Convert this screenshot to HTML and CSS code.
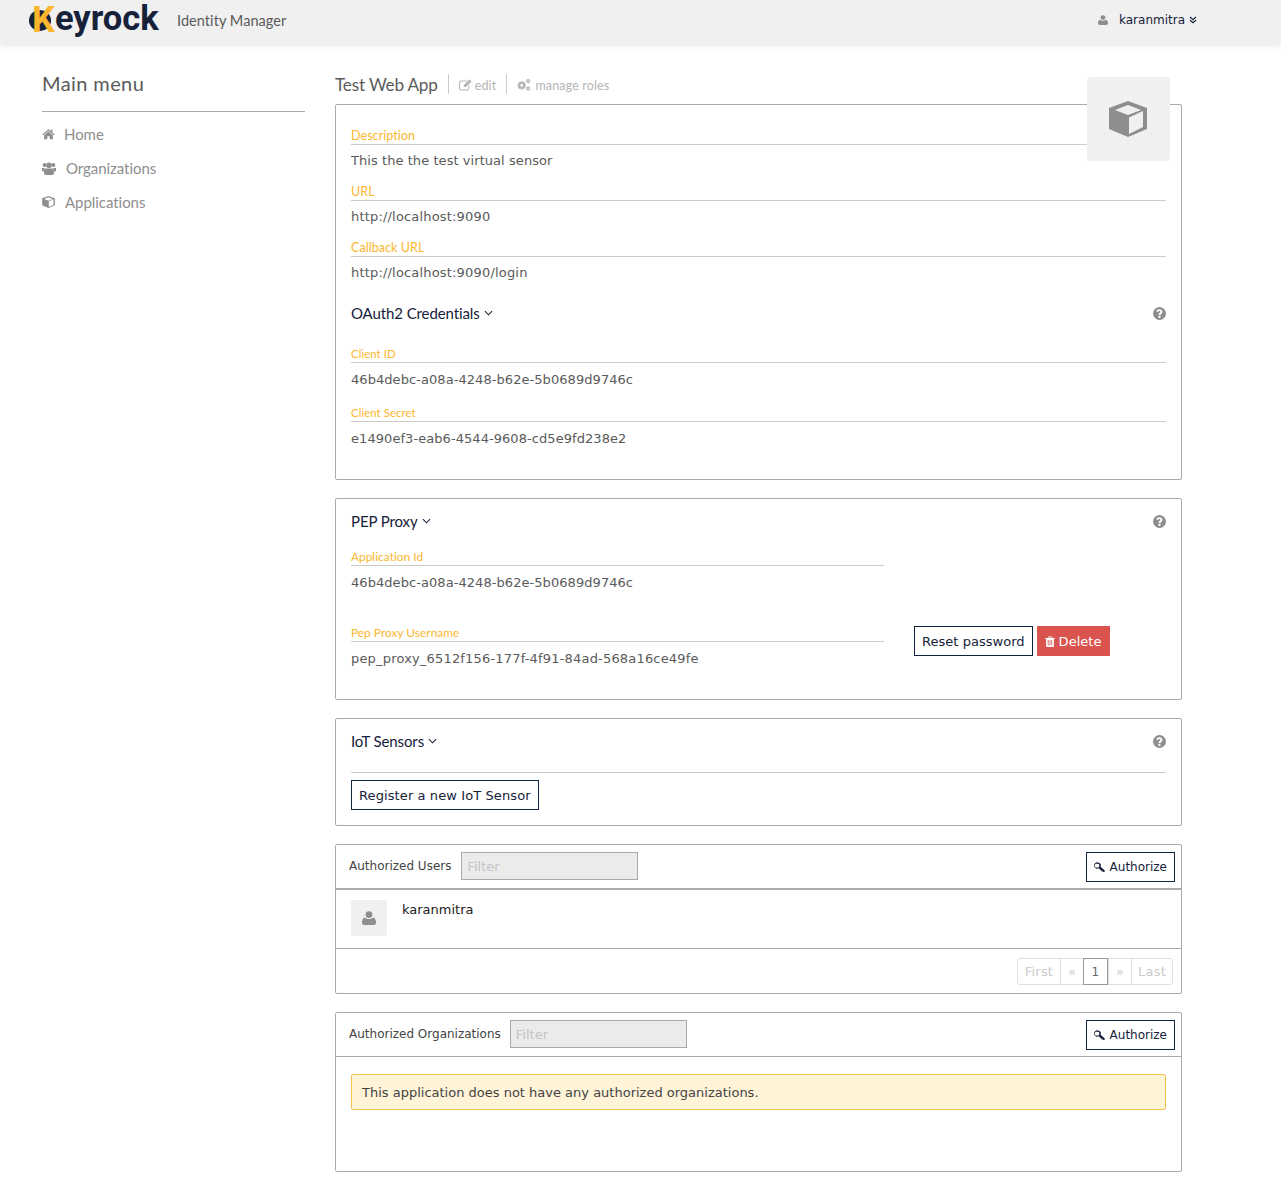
FILE: index.html
```html
<!DOCTYPE html>
<html>
<head>
  <meta charset="utf-8">
  <title>Keyrock Identity Manager</title>
  <link rel="stylesheet" href="styles.css">
</head>
<body>
  <svg class="defs" width="0" height="0">
    <symbol id="i-home" viewBox="0 0 16 14"><path d="M8 1 L0.5 7.4 L1.4 8.4 L8 2.9 L14.6 8.4 L15.5 7.4 L12.8 5.1 V1.6 H10.8 V3.4 Z M8 4 L2.6 8.5 V13.5 H6.5 V9.8 H9.5 V13.5 H13.4 V8.5 Z"/></symbol>
    <symbol id="i-users" viewBox="0 0 14 13"><circle cx="2.6" cy="3" r="2"/><circle cx="11.4" cy="3" r="2"/><circle cx="7" cy="3.2" r="2.8"/><path d="M0 6 H3 Q2.2 7 1.8 9.5 H0.8 Q0 9.5 0 8.5 Z M14 6 H11 Q11.8 7 12.2 9.5 H13.2 Q14 9.5 14 8.5 Z M3.5 6.5 H10.5 Q12 7 12 10 V11 Q12 13 10 13 H4 Q2 13 2 11 V10 Q2 7 3.5 6.5 Z"/></symbol>
    <symbol id="i-cube" viewBox="0 0 38 36"><path fill-rule="evenodd" d="M19 0 L38 7 V28 L19 36 L0 28 V7 Z M19 4 L6 9 L19 14 L32 9 Z M20 16.5 V33 L34 26 V10 Z"/></symbol>
    <symbol id="i-user" viewBox="0 0 14 14"><circle cx="7" cy="3.6" r="3.4"/><path d="M3 6.6 C5 8.6 9 8.6 11 6.6 C13 7 14 9 14 11.5 Q14 14 11.5 14 H2.5 Q0 14 0 11.5 C0 9 1 7 3 6.6 Z"/></symbol>
    <symbol id="i-help" viewBox="0 0 14 14"><path fill-rule="evenodd" d="M7 0 A7 7 0 1 1 7 14 A7 7 0 1 1 7 0 Z M6 9.8 V11.8 H8 V9.8 Z M7 2.4 C5.2 2.4 4.1 3.3 3.6 4.6 L5 5.6 C5.4 4.8 5.9 4.3 6.8 4.3 C7.6 4.3 8.1 4.7 8.1 5.2 C8.1 6.2 6 6.5 6 8.2 V9 H8 C8 7.7 10.2 7.4 10.2 5.1 C10.2 3.4 8.6 2.4 7 2.4 Z"/></symbol>
    <symbol id="i-trash" viewBox="0 0 12 14"><path fill-rule="evenodd" d="M4 0.5 H8 L9 2.5 H12 V3.7 H11 V12.5 Q11 14 9.5 14 H2.5 Q1 14 1 12.5 V3.7 H0 V2.5 H3 Z M4.6 1.6 L4.2 2.5 H7.8 L7.4 1.6 Z M3.2 5 V12 H4.2 V5 Z M5.5 5 V12 H6.5 V5 Z M7.8 5 V12 H8.8 V5 Z"/></symbol>
    <symbol id="i-key" viewBox="0 0 14 14"><path fill-rule="evenodd" d="M4.6 0.5 A4.1 4.1 0 0 1 8.4 6.2 L13.5 10.4 V12.6 H11.6 L10.6 11.5 L9.6 12 L9.2 10.6 L8 10.2 L6.3 8.1 A4.1 4.1 0 1 1 4.6 0.5 Z M3.9 2.3 A2.4 2.4 0 1 0 3.9 7 A2.4 2.4 0 1 0 3.9 2.3 Z"/></symbol>
    <symbol id="i-edit" viewBox="0 0 14 13"><path d="M2.2 1.5 H9 L7.9 2.6 H2.2 Q1.1 2.6 1.1 3.7 V10.3 Q1.1 11.4 2.2 11.4 H8.8 Q9.9 11.4 9.9 10.3 V7.6 L11 6.5 V10.3 Q11 12.5 8.8 12.5 H2.2 Q0 12.5 0 10.3 V3.7 Q0 1.5 2.2 1.5 Z M11.4 0.4 L13.6 2.6 L7.4 8.8 H5.2 V6.6 Z"/></symbol>
    <symbol id="i-cogs" viewBox="0 0 15 13"><path fill-rule="evenodd" d="M4 2.5 H6 L6.4 3.6 L7.6 3.1 L9 4.5 L8.4 5.6 L9.5 6 V8 L8.4 8.4 L9 9.5 L7.6 10.9 L6.4 10.4 L6 11.5 H4 L3.6 10.4 L2.4 10.9 L1 9.5 L1.6 8.4 L0.5 8 V6 L1.6 5.6 L1 4.5 L2.4 3.1 L3.6 3.6 Z M5 5.5 A1.5 1.5 0 1 0 5 8.5 A1.5 1.5 0 1 0 5 5.5 Z"/><path fill-rule="evenodd" d="M12 0 A2.3 2.3 0 1 1 12 4.6 A2.3 2.3 0 1 1 12 0 Z M12 1.5 A0.8 0.8 0 1 0 12 3.1 A0.8 0.8 0 1 0 12 1.5 Z M12 8 A2.3 2.3 0 1 1 12 12.6 A2.3 2.3 0 1 1 12 8 Z M12 9.5 A0.8 0.8 0 1 0 12 11.1 A0.8 0.8 0 1 0 12 9.5 Z"/></symbol>
    <symbol id="i-down" viewBox="0 0 10 6"><path d="M1 1 L5 5 L9 1" fill="none" stroke="currentColor" stroke-width="1.2"/></symbol>
    <symbol id="i-ddown" viewBox="0 0 8 8"><path d="M1 1 L4 3.6 L7 1 M1 4.2 L4 6.8 L7 4.2" fill="none" stroke="currentColor" stroke-width="1.2"/></symbol>
  </svg>

  <header class="topbar">
    <div class="logo"><span class="logo-k">K</span>eyrock</div>
    <div class="logo-sub">Identity Manager</div>
    <div class="user-menu">
      <svg class="ico ico-user"><use href="#i-user"/></svg>
      <span class="user-name">karanmitra</span>
      <svg class="ico ico-ddown"><use href="#i-ddown"/></svg>
    </div>
  </header>

  <div class="page">
    <nav class="sidebar">
      <h2 class="menu-title">Main menu</h2>
      <ul class="menu">
        <li><svg class="ico ico-menu"><use href="#i-home"/></svg><span class="m-home">Home</span></li>
        <li><svg class="ico ico-menu ico-users"><use href="#i-users"/></svg><span class="m-orgs">Organizations</span></li>
        <li><svg class="ico ico-menu"><use href="#i-cube"/></svg><span class="m-apps">Applications</span></li>
      </ul>
    </nav>

    <main class="content">
      <div class="title-row">
        <h1 class="app-title">Test Web App</h1>
        <a class="title-link"><svg class="ico ico-edit"><use href="#i-edit"/></svg>edit</a>
        <a class="title-link"><svg class="ico ico-cogs"><use href="#i-cogs"/></svg>manage roles</a>
      </div>

      <div class="app-avatar"><svg class="ico ico-cube-big"><use href="#i-cube"/></svg></div>

      <section class="panel panel-info">
        <div class="field"><div class="label">Description</div><div class="value">This the the test virtual sensor</div></div>
        <div class="field"><div class="label">URL</div><div class="value value-url">http://localhost:9090</div></div>
        <div class="field"><div class="label">Callback URL</div><div class="value value-url">http://localhost:9090/login</div></div>
        <div class="sub-head oauth-head">
          <h3>OAuth2 Credentials<svg class="ico ico-down"><use href="#i-down"/></svg></h3>
          <svg class="ico ico-help"><use href="#i-help"/></svg>
        </div>
        <div class="field field-cred"><div class="label label-cred">Client ID</div><div class="value">46b4debc-a08a-4248-b62e-5b0689d9746c</div></div>
        <div class="field field-cred"><div class="label label-cred">Client Secret</div><div class="value">e1490ef3-eab6-4544-9608-cd5e9fd238e2</div></div>
      </section>

      <section class="panel panel-pep">
        <div class="sub-head pep-head">
          <h3>PEP Proxy<svg class="ico ico-down"><use href="#i-down"/></svg></h3>
          <svg class="ico ico-help"><use href="#i-help"/></svg>
        </div>
        <div class="pep-row pep-first">
          <div class="field field-pep"><div class="label label-sm">Application Id</div><div class="value">46b4debc-a08a-4248-b62e-5b0689d9746c</div></div>
        </div>
        <div class="pep-row">
          <div class="field field-pep"><div class="label label-sm">Pep Proxy Username</div><div class="value value-url">pep_proxy_6512f156-177f-4f91-84ad-568a16ce49fe</div></div>
          <div class="pep-actions">
            <button class="btn">Reset password</button>
            <button class="btn btn-danger"><svg class="ico ico-trash"><use href="#i-trash"/></svg>Delete</button>
          </div>
        </div>
      </section>

      <section class="panel panel-iot">
        <div class="sub-head iot-head">
          <h3>IoT Sensors<svg class="ico ico-down"><use href="#i-down"/></svg></h3>
          <svg class="ico ico-help"><use href="#i-help"/></svg>
        </div>
        <button class="btn">Register a new IoT Sensor</button>
      </section>

      <section class="panel panel-list">
        <div class="list-head list-head-users">
          <span class="list-title">Authorized Users</span>
          <input class="filter" type="text" placeholder="Filter">
          <button class="btn btn-auth"><svg class="ico ico-key"><use href="#i-key"/></svg>Authorize</button>
        </div>
        <div class="list-row">
          <div class="row-avatar"><svg class="ico ico-avatar"><use href="#i-user"/></svg></div>
          <span class="row-name">karanmitra</span>
        </div>
        <div class="list-foot">
          <ul class="pager">
            <li class="pager-first">First</li><li class="pager-sm">«</li><li class="pager-on">1</li><li class="pager-sm">»</li><li class="pager-last">Last</li>
          </ul>
        </div>
      </section>

      <section class="panel panel-list">
        <div class="list-head">
          <span class="list-title">Authorized Organizations</span>
          <input class="filter" type="text" placeholder="Filter">
          <button class="btn btn-auth"><svg class="ico ico-key"><use href="#i-key"/></svg>Authorize</button>
        </div>
        <div class="list-body">
          <div class="alert">This application does not have any authorized organizations.</div>
        </div>
      </section>
    </main>
  </div>
</body>
</html>
```

FILE: styles.css
```css
*{
  box-sizing: border-box;
}
body{
  margin: 0;
  background-color: #fff;
  color: #5a5a5a;
  font-family: "DejaVu Sans", sans-serif;
  font-size: 13px;
  letter-spacing: .06px;
}
.defs{
  display: none;
}
.ico{
  fill: currentColor;
  flex: none;
}

/* top bar */
.topbar{
  display: flex;
  align-items: center;
  height: 44px;
  padding-left: 32px;
  padding-bottom: 4px;
  background-color: #f0f0f0;
  box-shadow: 0 1px 6px rgba(0,0,0,.12);
}
.logo{
  width: 128px;
  margin-bottom: 2px;
  color: #16213a;
  font-family: Roboto, sans-serif;
  font-size: 34.5px;
  font-weight: 700;
  line-height: 36px;
  letter-spacing: 0;
}
.logo-k{
  position: relative;
  z-index: 0;
  color: #fbb62d;
  font-size: 36px;
  vertical-align: -2px;
}
.logo-k::before{
  content: "";
  position: absolute;
  top: 11px;
  left: -3px;
  z-index: -1;
  width: 22px;
  height: 21px;
  border-radius: 50%;
  background-color: #16213a;
}
.logo-sub{
  margin-left: 17px;
  color: #5a5a5a;
  font-family: Lato, sans-serif;
  font-size: 14.5px;
}
.user-menu{
  display: flex;
  align-items: center;
  margin-left: auto;
  margin-right: 84px;
  color: #16213a;
  font-size: 12px;
  letter-spacing: 0;
}
.ico-user{
  width: 10px;
  height: 10px;
  margin-right: 11px;
  color: #8e8e8e;
}
.ico-ddown{
  width: 8px;
  height: 8px;
  margin-left: 4px;
}

/* page */
.page{
  display: flex;
  gap: 30px;
  padding-left: 42px;
}
.sidebar{
  width: 263px;
}
.menu-title{
  margin: 26px 0 0;
  padding-bottom: 14px;
  border-bottom: 1px solid #aaa;
  color: #5a5a5a;
  font-family: Lato, sans-serif;
  font-size: 20px;
  font-weight: 400;
  line-height: 27px;
  letter-spacing: .4px;
}
.menu{
  margin: 5px 0 0;
  padding: 0;
  list-style: none;
}
.menu li{
  display: flex;
  align-items: center;
  height: 34px;
  color: #8e8e8e;
  font-family: Lato, sans-serif;
  font-size: 15px;
  letter-spacing: -.05px;
}
.ico-menu{
  width: 13px;
  height: 12px;
}
.ico-users{
  width: 14px;
  height: 13px;
}
.m-home{
  margin-left: 9px;
}
.m-orgs{
  margin-left: 10px;
}
.m-apps{
  margin-left: 10px;
}

/* content */
.content{
  position: relative;
  width: 847px;
}
.title-row{
  display: flex;
  align-items: center;
  height: 60px;
  padding-top: 20px;
}
.app-title{
  margin: 0;
  padding-right: 10px;
  color: #5a5a5a;
  font-family: Lato, sans-serif;
  font-size: 17.2px;
  font-weight: 400;
  letter-spacing: -.2px;
}
.title-link{
  display: flex;
  align-items: center;
  height: 20px;
  padding: 2px 10px 0;
  border-left: 1px solid #ccc;
  color: #b5b5b5;
  font-family: Lato, sans-serif;
  font-size: 12.5px;
  letter-spacing: .15px;
}
.ico-edit{
  width: 13px;
  height: 12px;
  margin-right: 3px;
}
.ico-cogs{
  width: 14px;
  height: 12px;
  margin-right: 4px;
}
.app-avatar{
  position: absolute;
  top: 33px;
  left: 752px;
  display: flex;
  align-items: center;
  justify-content: center;
  width: 83px;
  height: 84px;
  border-radius: 3px;
  background-color: #f0f0f0;
  color: #8e8e8e;
}
.ico-cube-big{
  width: 38px;
  height: 36px;
  margin-right: 2px;
}

/* panels */
.panel{
  margin-bottom: 18px;
  border: 1px solid #aaa;
  border-radius: 2px;
}
.panel-info{
  padding: 22px 15px 16px;
}
.panel-pep{
  height: 202px;
  padding: 12px 15px 0;
}
.panel-iot{
  height: 108px;
  padding: 12px 15px 0;
}
.label{
  height: 18px;
  border-bottom: 1px solid #ccc;
  color: #fbb62d;
  font-family: Lato, sans-serif;
  font-size: 12.5px;
  line-height: 17px;
}
.label-sm{
  font-size: 11.8px;
}
.label-cred{
  font-size: 11.4px;
}
.value{
  padding: 6px 0 12px;
  line-height: 20px;
}
.value-url{
  letter-spacing: .18px;
}
.field-cred .value{
  padding: 7px 0 14px;
}
.sub-head{
  display: flex;
  align-items: center;
  justify-content: space-between;
}
.sub-head h3{
  display: flex;
  align-items: center;
  margin: 0;
  color: #16213a;
  font-family: Lato, sans-serif;
  font-size: 15px;
  font-weight: 400;
  line-height: 20px;
  letter-spacing: -.1px;
}
.oauth-head{
  margin: 8px 0 22px;
}
.pep-head{
  margin-bottom: 17px;
}
.iot-head{
  margin-bottom: 7px;
  padding-bottom: 21px;
  border-bottom: 1px solid #ccc;
}
.ico-down{
  width: 9px;
  height: 6px;
  margin-left: 4px;
  color: #16213a;
}
.ico-help{
  width: 13px;
  height: 13px;
  color: #8e8e8e;
}
.pep-row{
  display: flex;
}
.pep-first{
  margin-bottom: 31px;
}
.field-pep{
  width: 533px;
}
.field-pep .value{
  padding: 7px 0 0;
}
.pep-actions{
  display: flex;
  gap: 4px;
  margin: 2px 0 0 30px;
}
.btn{
  height: 30px;
  padding: 0 7px;
  border: 1px solid #0e2340;
  border-radius: 0;
  background-color: #fff;
  color: #16213a;
  font-family: "DejaVu Sans", sans-serif;
  font-size: 13px;
  letter-spacing: .1px;
}
.pep-actions .btn{
  letter-spacing: .03px;
}
.btn-danger{
  display: flex;
  align-items: center;
  border-color: #d9534f;
  background-color: #d9534f;
  color: #fff;
}
.ico-trash{
  width: 10px;
  height: 11px;
  margin-right: 4px;
}

/* lists */
.list-head{
  display: flex;
  align-items: flex-start;
  height: 44px;
  padding: 7px 6px 0 13px;
  border-bottom: 1px solid #aaa;
  color: #444;
  font-size: 12px;
}
.list-head-users{
  height: 45px;
  border-bottom-width: 2px;
}
.list-title{
  line-height: 29px;
  letter-spacing: 0;
}
.filter{
  width: 177px;
  height: 28px;
  margin-left: 9px;
  padding: 0 5px;
  border: 1px solid #aaa;
  background-color: #ebebeb;
  font-family: "DejaVu Sans", sans-serif;
  font-size: 13px;
}
.list-head-users .filter{
  margin-left: 10px;
}
.filter::placeholder{
  color: #c4c4c4;
}
.btn-auth{
  display: flex;
  align-items: center;
  margin-left: auto;
  font-size: 12px;
  letter-spacing: 0;
}
.ico-key{
  width: 11px;
  height: 11px;
  margin-right: 5px;
}
.list-row{
  display: flex;
  height: 59px;
  padding: 10px 15px 0;
  border-bottom: 1px solid #aaa;
}
.row-avatar{
  display: flex;
  align-items: center;
  justify-content: center;
  width: 36px;
  height: 36px;
  border-radius: 2px;
  background-color: #f0f0f0;
  color: #8e8e8e;
}
.ico-avatar{
  width: 14px;
  height: 14px;
}
.row-name{
  margin-left: 15px;
  color: #222;
  line-height: 19px;
  letter-spacing: 0;
}
.list-foot{
  display: flex;
  justify-content: flex-end;
  height: 44px;
  padding: 9px 8px 0 0;
}
.pager{
  display: flex;
  height: 27px;
  margin: 0;
  padding: 0;
  border: 1px solid #e0e0e0;
  border-radius: 3px;
  color: #ccc;
  list-style: none;
  letter-spacing: .2px;
}
.pager li{
  display: flex;
  align-items: center;
  justify-content: center;
  border-left: 1px solid #e0e0e0;
}
.pager li:first-child{
  border-left: 0;
}
.pager-first{
  width: 42px;
}
.pager-last{
  width: 41px;
}
.pager-sm{
  width: 23px;
}
.pager-on{
  width: 25px;
  margin: -1px 0;
  border: 1px solid #999 !important;
  color: #666;
  font-size: 12px;
}
.list-body{
  height: 114px;
  padding: 17px 15px 0;
}
.alert{
  height: 36px;
  padding: 0 10px;
  border: 1px solid #f5c250;
  border-radius: 2px;
  background-color: #fff3d8;
  color: #444;
  line-height: 35px;
  letter-spacing: 0;
}
```
